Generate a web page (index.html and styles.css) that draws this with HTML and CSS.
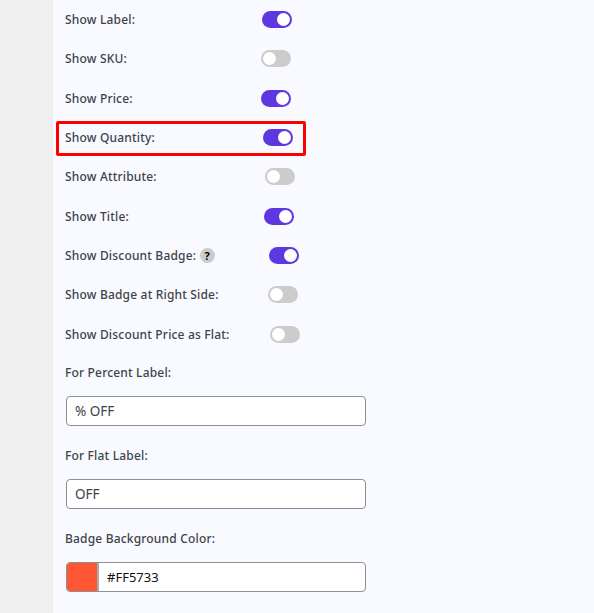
FILE: index.html
```html
<!DOCTYPE html>
<html lang="en">
<head>
    <meta charset="UTF-8">
    <title>Badge Settings</title>
    <link rel="stylesheet" href="styles.css">
</head>
<body>
    <div class="sidebar"></div>
    <div class="panel">
        <div class="row">
            <span class="row-label label-a">Show Label:</span>
            <span class="toggle on"></span>
        </div>
        <div class="row">
            <span class="row-label label-b">Show SKU:</span>
            <span class="toggle"></span>
        </div>
        <div class="row">
            <span class="row-label label-b">Show Price:</span>
            <span class="toggle on"></span>
        </div>
        <div class="row">
            <div class="highlight"></div>
            <span class="row-label label-c">Show Quantity:</span>
            <span class="toggle on"></span>
        </div>
        <div class="row">
            <span class="row-label label-d">Show Attribute:</span>
            <span class="toggle"></span>
        </div>
        <div class="row">
            <span class="row-label label-e">Show Title:</span>
            <span class="toggle on"></span>
        </div>
        <div class="row">
            <span class="row-label label-f">Show Discount Badge: <span class="help">?</span></span>
            <span class="toggle on"></span>
        </div>
        <div class="row">
            <span class="row-label label-g">Show Badge at Right Side:</span>
            <span class="toggle"></span>
        </div>
        <div class="row">
            <span class="row-label label-h">Show Discount Price as Flat:</span>
            <span class="toggle"></span>
        </div>

        <div class="field">
            <div class="field-label">For Percent Label:</div>
            <div class="text-box">% OFF</div>
        </div>
        <div class="field">
            <div class="field-label">For Flat Label:</div>
            <div class="text-box">OFF</div>
        </div>
        <div class="field">
            <div class="field-label">Badge Background Color:</div>
            <div class="text-box color-box">
                <span class="swatch"></span>
                <span class="color-value">#FF5733</span>
            </div>
        </div>
    </div>
</body>
</html>
```

FILE: styles.css
```css
html, body {
    height: 100%;
}
body {
    margin: 0;
    display: flex;
    overflow: hidden;
    background-color: #f9faff;
    color: #3c434a;
    font-family: 'Noto Sans', 'Open Sans', sans-serif;
    font-size: 12px;
}
.sidebar {
    width: 53px;
    flex-shrink: 0;
    background-color: #f0f0f1;
}
.panel {
    flex: 1;
    padding-left: 12px;
}
.row {
    position: relative;
    display: flex;
    align-items: center;
    height: 39.3px;
}
.row-label {
    font-weight: 500;
    letter-spacing: 0.18px;
}
/* the toggles don't line up in the original, each follows its own label cell */
.label-a { width: 197px; }
.label-b { width: 196px; }
.label-c { width: 198px; }
.label-d { width: 200px; }
.label-e { width: 199px; }
.label-f { width: 204px; }
.label-g { width: 203px; }
.label-h { width: 205px; }
.toggle {
    position: relative;
    width: 30px;
    height: 17px;
    border-radius: 9px;
    background-color: #ccc;
}
.toggle::after {
    content: "";
    position: absolute;
    top: 2px;
    left: 2px;
    width: 13px;
    height: 13px;
    border-radius: 50%;
    background-color: #fff;
}
.toggle.on {
    background-color: #5f37e0;
}
.toggle.on::after {
    left: 15px;
}
.highlight {
    position: absolute;
    left: -9px;
    top: 3px;
    width: 244px;
    height: 29px;
    border: 3px solid #f00;
    border-radius: 2px;
}
.help {
    display: inline-block;
    width: 15px;
    height: 15px;
    border-radius: 50%;
    background-color: #ccc;
    color: #000;
    font-size: 11px;
    font-weight: 700;
    line-height: 15px;
    text-align: center;
    letter-spacing: 0;
}
.field {
    margin-bottom: 11.3px;
}
.field-label {
    box-sizing: border-box;
    height: 42px;
    padding-top: 9px;
    font-weight: 500;
    letter-spacing: 0.18px;
    line-height: 20px;
}
.text-box {
    display: flex;
    align-items: center;
    box-sizing: border-box;
    width: 300px;
    height: 30px;
    margin-left: 1px;
    padding-left: 8px;
    border: 1px solid #8c8f94;
    border-radius: 4px;
    background-color: #fff;
    font-size: 13.5px;
}
.color-box {
    padding-left: 0;
    overflow: hidden;
    font-size: 13px;
}
.swatch {
    width: 30px;
    height: 100%;
    border-right: 2px solid #aaa;
    background-color: #ff5733;
}
.color-value {
    margin-left: 8px;
    color: #111;
}
```
